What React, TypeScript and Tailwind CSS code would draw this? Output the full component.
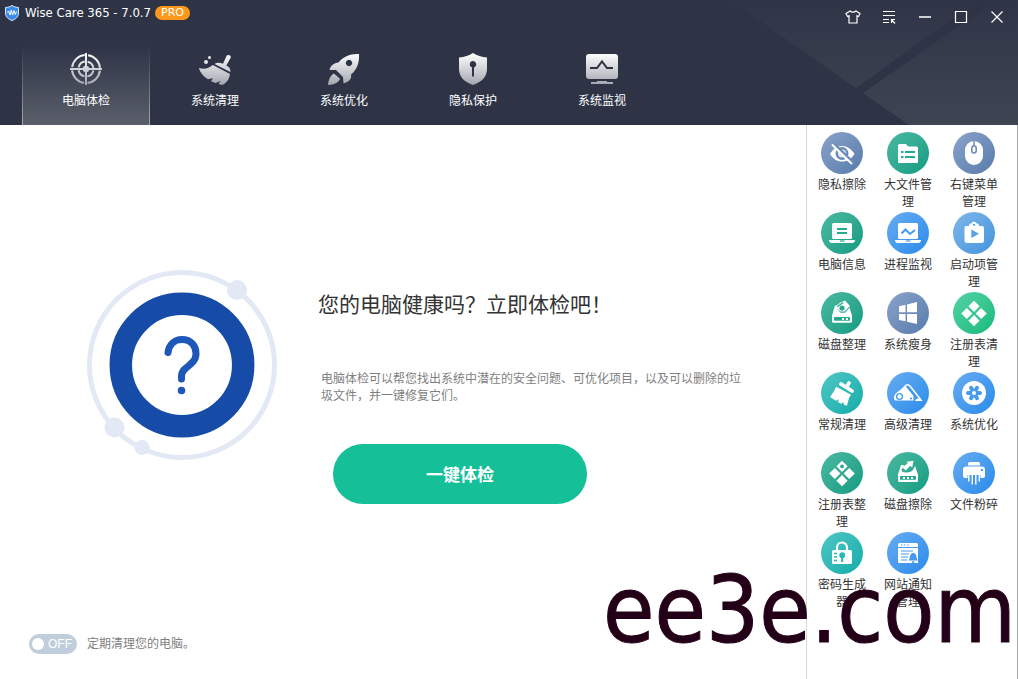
import { useState, type ReactNode } from "react";

const TONES = {
  slate: "bg-linear-to-br from-[#8aa3ca] to-[#587cac]",
  green: "bg-linear-to-br from-[#49b9a1] to-[#0c9c82]",
  blue: "bg-linear-to-br from-[#66acf1] to-[#278bea]",
  sky: "bg-linear-to-br from-[#7fb6e9] to-[#4294de]",
  emerald: "bg-linear-to-br from-[#52d2a5] to-[#0dbb7d]",
  teal: "bg-linear-to-br from-[#4cc7c4] to-[#0aacaa]",
};

type Tone = keyof typeof TONES;

const INK: Record<Tone, string> = {
  slate: "#6c8bb8",
  green: "#27a991",
  blue: "#469bee",
  sky: "#5aa2e2",
  emerald: "#2cc48f",
  teal: "#27b8b5",
};

type Tool = { label: string; tone: Tone; art: (ink: string) => ReactNode };

const laptop = (
  <>
    <rect x="11" y="11" width="20" height="16" rx="1.5" />
    <path d="M8 28h26c0 2-1 3-3 3H11c-2 0-3-1-3-3z" />
  </>
);

const diamond = (x: number, y: number) => (
  <path d={`M${x} ${y - 5.6}l5.6 5.6l-5.6 5.6l-5.6 -5.6z`} />
);

const TOOLS: Tool[] = [
  {
    label: "隐私擦除",
    tone: "slate",
    art: (ink) => (
      <>
        <path d="M9 22c3-5 7-8 12-8s9.500 3 12.500 8c-3 5-7.500 7.500-12.500 7.500S12 27 9 22z" />
        <circle cx="21" cy="21.500" r="6.500" fill={ink} />
        <circle cx="21" cy="21.500" r="4" fillOpacity="0.8" />
        <path d="M12.500 11.500L32.500 31" stroke={ink} strokeWidth="3" />
        <path d="M11 12.500L31 32" stroke="white" strokeWidth="2" />
      </>
    ),
  },
  {
    label: "大文件管理",
    tone: "green",
    art: (ink) => (
      <>
        <path d="M11 13.500q0-1.500 1.500-1.500h6.500l2 2.500h8.500q1.500 0 1.500 1.500v13.500q0 1.500-1.500 1.500h-17q-1.500 0-1.500-1.500z" />
        <path d="M14 20h2.500M18 20h10M14 25h2.500M18 25h10" stroke={ink} strokeWidth="2" />
      </>
    ),
  },
  {
    label: "右键菜单管理",
    tone: "slate",
    art: (ink) => (
      <>
        <rect x="12" y="9" width="18" height="24" rx="9" />
        <path d="M21 9v5" stroke={ink} strokeWidth="1.5" />
        <rect x="18.800" y="14" width="4.400" height="7" rx="2.200" stroke={ink} strokeWidth="1.6" />
      </>
    ),
  },
  {
    label: "电脑信息",
    tone: "green",
    art: (ink) => (
      <>
        {laptop}
        <path d="M16 17h10M16 21h10" stroke={ink} strokeWidth="2" />
        <path d="M19 29h4.500" stroke={ink} strokeWidth="1.2" />
      </>
    ),
  },
  {
    label: "进程监视",
    tone: "blue",
    art: (ink) => (
      <>
        {laptop}
        <path d="M14.500 21.500L18.500 17.500L23 22L28 18" fill="none" stroke={ink} strokeWidth="2" />
        <path d="M19 29h4.500" stroke={ink} strokeWidth="1.2" />
      </>
    ),
  },
  {
    label: "启动项管理",
    tone: "sky",
    art: (ink) => (
      <>
        <path d="M16 14c0-2 1-2.500 2.500-2.500C19 10.300 20 9.800 21 9.800s2 .5 2.500 1.700c1.500 0 2.500.5 2.500 2.500h3.500q1.500 0 1.500 2v12.500q0 2.500-2.500 2.500h-14.500q-2.500 0-2.500-2.500V16q0-2 1.500-2z" />
        <circle cx="21" cy="12.800" r="1.100" fill={ink} />
        <path d="M18.300 17.500L26 21.800L18.300 26z" fill={ink} />
      </>
    ),
  },
  {
    label: "磁盘整理",
    tone: "green",
    art: (ink) => (
      <>
        <path d="M14 13.500h1.500v2.500l4 4.800h4.500l4.500-5L31 23.500v5.800q0 1.500-1.500 1.500h-17q-1.500 0-1.500-1.500v-5.800z" />
        <path d="M14 14.800L19.500 10.500L24 8.500L29 14L23.500 19.500H19.500z" />
        <path d="M16.200 14.800l6-4.300" stroke={ink} strokeWidth="1.300" />
        <circle cx="21" cy="16" r="2.600" fill={ink} />
        <rect x="13" y="25" width="16" height="3.700" rx="0.5" fill={ink} />
        <path d="M21 26h2v2h-2zM25 26h2v2h-2z" />
      </>
    ),
  },
  {
    label: "系统瘦身",
    tone: "slate",
    art: () => (
      <path d="M12 14.300L18.500 12.800V20.300H12zM20 12.500L30 10V20.300H20zM12 22H18.500V29.300L12 28zM20 22H30V32L20 29.700z" />
    ),
  },
  {
    label: "注册表清理",
    tone: "emerald",
    art: () => (
      <>
        {diamond(21, 14.3)}
        {diamond(13.8, 21.5)}
        {diamond(28.2, 21.5)}
        {diamond(21, 28.7)}
      </>
    ),
  },
  {
    label: "常规清理",
    tone: "teal",
    art: () => (
      <>
        <path d="M15.200 14.800L30 22.800L28 26L26 33.800l-3-1l-.8-2.800l-1.700 1.800l-3.500-1.500l.8-3l-2.800 1.500L9 25q3.500-4 6.200-10.200z" />
        <path d="M20 12L31 19" stroke="white" strokeWidth="3.800" strokeLinecap="round" />
        <path d="M25.500 15L28 11" stroke="white" strokeWidth="3.600" strokeLinecap="round" />
      </>
    ),
  },
  {
    label: "高级清理",
    tone: "blue",
    art: (ink) => (
      <>
        <path d="M7 26.500C7 22.500 9.500 20.500 12 19L18 13.500L26.500 23v5.500H9q-2 0-2-2z" />
        <path d="M18 14c1.500-1.800 3.500-1.800 5 0L34 28" fill="none" stroke="white" strokeWidth="1.500" />
        <path d="M20.500 15.500L29.500 26.500" stroke={ink} strokeWidth="1.200" />
        <path d="M28 29c.5-2 2-2.500 4-2.500l4 2.500z" />
        <circle cx="12.500" cy="24.500" r="2.900" stroke={ink} strokeWidth="1.400" />
        <circle cx="24" cy="26.500" r="1.100" fill={ink} />
      </>
    ),
  },
  {
    label: "系统优化",
    tone: "blue",
    art: (ink) => (
      <>
        <circle cx="21" cy="21" r="12" />
        <g stroke={ink} strokeWidth="4" strokeLinecap="round">
          <path d="M15 21h12M18 15.800l6 10.400M24 15.800l-6 10.400" />
        </g>
        <circle cx="21" cy="21" r="4" fill={ink} />
        <circle cx="21" cy="21" r="2" />
      </>
    ),
  },
  {
    label: "注册表整理",
    tone: "green",
    art: (ink) => (
      <>
        {diamond(21, 14.3)}
        {diamond(13.8, 21.5)}
        {diamond(28.2, 21.5)}
        {diamond(21, 28.7)}
        <circle cx="21" cy="14.300" r="1.900" fill={ink} />
      </>
    ),
  },
  {
    label: "磁盘擦除",
    tone: "green",
    art: (ink) => (
      <>
        <path d="M14 13h3L14.500 18q0 2.500 5 2.500t7-3.500l1.500-3L31 22.500v6q0 1.500-1.500 1.500h-17q-1.500 0-1.500-1.500v-6z" />
        <path d="M19.500 9.800l7-1l-1.300 6.700l-1.900-1.700l-4.600 4.700l-3.400-3.200l5.600-4.100z" />
        <rect x="13" y="24" width="16" height="3.700" rx="0.500" fill={ink} />
        <path d="M16 25h2v2h-2zM20 25h2v2h-2zM24 25h2v2h-2z" />
      </>
    ),
  },
  {
    label: "文件粉碎",
    tone: "blue",
    art: (ink) => (
      <>
        <path d="M15 13.500V11.500q0-1.500 1.500-1.500h9q1.500 0 1.500 1.500v2z" />
        <path d="M10 17.500q0-3 3-3h16q3 0 3 3v6.500q0 2-2 2h-2.500v-3h-13v3h-2.500q-2 0-2-2z" />
        <path d="M15.800 22v7.500M19.300 22v10.500M22.800 22v10.500M26.300 22v7.500" stroke="white" strokeWidth="1.400" />
        <path d="M28 17h2v2h-2z" fill={ink} />
      </>
    ),
  },
  {
    label: "密码生成器",
    tone: "teal",
    art: (ink) => (
      <>
        <path d="M16 19v-3.500a5 5 0 0 1 10 0V19" fill="none" stroke="white" strokeWidth="2.200" />
        <rect x="11" y="18" width="20" height="14" rx="1.500" />
        <path d="M13 21.500h3M13 25h3M13 28.500h3" stroke={ink} strokeWidth="1.500" />
        <circle cx="21.200" cy="23.200" r="2.900" fill={ink} />
        <path d="M21.200 24v6" stroke={ink} strokeWidth="2" />
      </>
    ),
  },
  {
    label: "网站通知管理",
    tone: "blue",
    art: (ink) => (
      <>
        <path d="M11 12.500q0-1.500 1.500-1.500h17q1.500 0 1.500 1.500V15H11zM11 16h20v15H12.500q-1.500 0-1.500-1.500z" />
        <path d="M14 13h1.500M17 13h1.500M20 13h1.500" stroke={ink} strokeWidth="1" />
        <path d="M14 19h12M14 22h8M14 25h7M14 28h6" stroke={ink} strokeWidth="1.200" />
        <path d="M21.500 28.500c2-1.500.5-7.500 4.700-7.500s2.800 6 4.800 7.500z" fill={ink} />
        <path d="M24.800 30h2.600" stroke={ink} strokeWidth="1.500" />
      </>
    ),
  },
];

const NAV: { label: string; art: ReactNode }[] = [
  {
    label: "电脑体检",
    art: (
      <>
        <g fill="none" stroke="url(#metal)">
          <circle cx="16" cy="16" r="14" strokeWidth="2" strokeDasharray="18.500 3.490" strokeDashoffset="-1.750" />
          <circle cx="16" cy="16" r="7.500" strokeWidth="2" strokeDasharray="8.800 2.980" strokeDashoffset="-1.500" />
        </g>
        <path d="M15 0h2v32h-2zM0 15h32v2H0z" />
        <circle cx="16" cy="16" r="3.200" />
      </>
    ),
  },
  {
    label: "系统清理",
    art: (
      <>
        <circle cx="7" cy="9" r="2" />
        <circle cx="10.500" cy="4.500" r="1.500" />
        <path d="M29 2q3.300 0 2.700 2.800l-4.400 7.700q4.700 2 4 6.500L15.500 11q3-2.500 8.500-.2L27.500 3q.5-1 1.500-1z" />
        <path d="M13.800 12L31 21c-1 5.500-3 8.500-7.500 11l-4-1l2-3l-5 2l-4.500-1.800l2-3l-5 1C4.500 23.500 1 19.500 0 15c5.500 1.500 9.500.5 13.800-3z" />
      </>
    ),
  },
  {
    label: "系统优化",
    art: (
      <>
        <path
          fillRule="evenodd"
          d="M31 1c.6 8.500-2 16-8 20.500c1 4-2 7.500-7.500 9l-.5-6.500l-7-7L1.500 17c1-4.500 4.500-7 9-7.500C15.500 3.500 22 .5 31 1zM21 6.800a3.200 3.200 0 1 0 .01 0z"
        />
        <path d="M6 20.500l6 5.300c-1.500 4-6 6.200-12 6.200c.3-5 2.200-9.500 6-11.500z" />
      </>
    ),
  },
  {
    label: "隐私保护",
    art: (
      <path
        fillRule="evenodd"
        d="M16 0c4 2.500 8.500 4 14 4.500V16c0 8-5.500 13-14 16C7.500 29 2 24 2 16V4.500C7.500 4 12 2.500 16 0zM16 8a3.300 3.300 0 0 0-1 6.400V23.500h2V14.400A3.300 3.300 0 0 0 16 8z"
      />
    ),
  },
  {
    label: "系统监视",
    art: (
      <>
        <rect x="0" y="1" width="32" height="25" rx="3" />
        <path d="M4 15h7l5-6.500L21 15h6" fill="none" stroke="#2e3446" strokeWidth="2" />
        <path d="M11 28h10v1h6v2H5v-2h6z" />
      </>
    ),
  },
];

function WindowButton({ label, children }: { label: string; children: ReactNode }) {
  return (
    <button type="button" aria-label={label} className="flex h-[34px] w-9 items-center justify-center text-white">
      <svg viewBox="0 0 16 16" className="size-4" fill="none" stroke="currentColor" strokeWidth="1.2">
        {children}
      </svg>
    </button>
  );
}

function Header() {
  const [active, setActive] = useState(0);
  return (
    <header className="relative bg-[#2e3446] text-white">
      <svg className="absolute top-0 right-0 h-full w-[288px]" viewBox="0 0 288 125" preserveAspectRatio="none" aria-hidden="true">
        <defs>
          <linearGradient id="facet" x1="0" y1="0" x2="0" y2="125" gradientUnits="userSpaceOnUse">
            <stop offset="0" stopColor="#2f3547" />
            <stop offset="1" stopColor="#3f4453" />
          </linearGradient>
        </defs>
        <path d="M0 0L126 88L248 0zM133 93L179 125H288V0H267z" fill="url(#facet)" />
      </svg>
      <div className="relative flex h-[45px] items-start justify-between pr-[3px] pl-[5px]">
        <div className="flex h-[26px] items-center">
          <svg viewBox="0 0 14 16" className="h-4 w-[14px]" aria-hidden="true">
            <path d="M7 .5C9 1.800 11 2.300 13.500 2.500V8c0 4-3 6.300-6.500 7.500C3.500 14.300.5 12 .5 8V2.500C3 2.300 5 1.800 7 .5z" fill="#3b8be8" stroke="#d7e8fb" />
            <path d="M2.500 7.500l1-1.500l1.500 4L6.300 5L7.500 10L9 5.500l1.300 4l1.200-3" fill="none" stroke="white" />
          </svg>
          <h1 className="ml-[6px] font-['DejaVu_Sans_Condensed','DejaVu_Sans',sans-serif] text-[13px]">
            Wise Care 365 - 7.0.7
          </h1>
          <span className="ml-1 rounded-full bg-[#ff981a] px-[6px] font-['DejaVu_Sans',sans-serif] text-[11px] leading-[14px]">PRO</span>
        </div>
        <div className="flex">
          <WindowButton label="换肤">
            <path d="M5 2C6.500 3.500 9.500 3.500 11 2L15 4.500L13.500 7.500L12 6.800V14H4V6.800L2.500 7.500L1 4.500z" />
          </WindowButton>
          <WindowButton label="菜单">
            <path d="M2 2.500h12M2 6.500h12M2 10.500h6M2 13.500h6M14 14.500l-3.500-4M10.500 14v-3.500H14" />
          </WindowButton>
          <WindowButton label="最小化">
            <path d="M2 8h12" strokeWidth="2" stroke="#d0d0d0" />
          </WindowButton>
          <WindowButton label="最大化">
            <path d="M2.500 2.500h11v11h-11z" />
          </WindowButton>
          <WindowButton label="关闭">
            <path d="M2.500 2.500l11 11M13.500 2.500l-11 11" />
          </WindowButton>
        </div>
      </div>
      <nav className="relative flex gap-px pl-[22px]">
        {NAV.map((item, i) => (
          <button
            key={item.label}
            type="button"
            aria-current={i === active ? "page" : undefined}
            onClick={() => setActive(i)}
            className={
              "flex h-20 w-32 flex-col items-center border-x pt-2 text-[12px] leading-[18px] " +
              (i === active
                ? "bg-linear-to-b from-[#2e3446] to-[#5b5f6b] [border-image:linear-gradient(to_bottom,#2e3446,#a9acb3)_1]"
                : "border-transparent")
            }
          >
            <svg viewBox="0 0 32 32" className="size-8" fill="url(#metal)" aria-hidden="true">
              <defs>
                <linearGradient id="metal" x1="0" y1="0" x2="0" y2="32" gradientUnits="userSpaceOnUse">
                  <stop offset="0" stopColor="#ffffff" />
                  <stop offset="1" stopColor="#a3a6af" />
                </linearGradient>
              </defs>
              {item.art}
            </svg>
            <span className="mt-[6px]">{item.label}</span>
          </button>
        ))}
      </nav>
    </header>
  );
}

function Checkup() {
  const [scheduled, setScheduled] = useState(false);
  return (
    <main className="flex min-w-0 flex-1 flex-col">
      <div className="flex flex-1 items-start pt-[145px] pl-[87px]">
        <svg viewBox="0 0 190 190" className="size-[190px] shrink-0" aria-hidden="true">
          <circle cx="95" cy="95" r="92.500" fill="none" stroke="#e2e8f4" strokeWidth="5" />
          <g fill="#e2e8f4">
            <circle cx="150" cy="20" r="10" />
            <circle cx="27.500" cy="157.500" r="10" />
            <circle cx="55" cy="177.500" r="7.500" />
          </g>
          <circle cx="95" cy="95" r="61.200" fill="none" stroke="#164ba8" strokeWidth="22.500" />
          <path
            d="M81 82.500C82 75 87 69.500 95 69.500C104 69.500 109 76 109 83.500C109 96 94.500 96 94.500 106V109"
            fill="none"
            stroke="#1e57b8"
            strokeWidth="7"
            strokeLinecap="round"
            strokeLinejoin="round"
          />
          <circle cx="94.500" cy="120.500" r="3.800" fill="#1e57b8" />
        </svg>
        <div className="ml-[41px] flex flex-col items-start pt-[18px]">
          <h2 className="text-[21px] leading-[30px] text-[#333]">您的电脑健康吗？立即体检吧！</h2>
          <p className="mt-[51px] ml-[3px] max-w-[424px] text-[12px] leading-[17px] text-[#808080]">
            电脑体检可以帮您找出系统中潜在的安全问题、可优化项目，以及可以删除的垃圾文件，并一键修复它们。
          </p>
          <button
            type="button"
            className="mt-[41px] ml-[15px] h-[60px] w-[254px] rounded-full bg-[#15bf98] text-[17px] font-bold text-white"
          >
            一键体检
          </button>
        </div>
      </div>
      <label className="flex items-center gap-[10px] pb-[25px] pl-[29px] text-[12px] leading-[17px] text-[#808080]">
        <input
          type="checkbox"
          role="switch"
          className="peer sr-only"
          checked={scheduled}
          onChange={(e) => setScheduled(e.target.checked)}
        />
        <span
          aria-hidden="true"
          className="flex h-5 w-12 items-center gap-1 rounded-full bg-[#c0cedc] px-[3px] font-['Liberation_Sans',sans-serif] text-[12px] text-white peer-checked:flex-row-reverse peer-checked:bg-[#15bf98]"
        >
          <span className="size-3 rounded-full bg-white" />
          {scheduled ? "ON" : "OFF"}
        </span>
        <span className="pb-[3px]">定期清理您的电脑。</span>
      </label>
    </main>
  );
}

function Toolbox() {
  return (
    <aside className="w-[212px] shrink-0 border-x border-l-[#d9d9d9] border-r-[#a5a5a5] pt-[7px] pl-[2px]">
      <ul className="grid auto-rows-[80px] grid-cols-[repeat(3,66px)]">
        {TOOLS.map(({ label, tone, art }) => (
          <li key={label} className="flex justify-center">
            <button type="button" className="flex h-full w-[50px] flex-col items-center text-[12px] leading-[17px] text-[#333]">
              <span className={"rounded-full " + TONES[tone]}>
                <svg viewBox="0 0 42 42" className="size-[42px]" fill="white" aria-hidden="true">
                  {art(INK[tone])}
                </svg>
              </span>
              <span className="mt-px">{label}</span>
            </button>
          </li>
        ))}
      </ul>
    </aside>
  );
}

export default function App() {
  return (
    <div className="relative flex min-h-screen flex-col overflow-hidden bg-white font-['Noto_Sans_CJK_SC',sans-serif]">
      <Header />
      <div className="flex flex-1">
        <Checkup />
        <Toolbox />
      </div>
      <p className="pointer-events-none absolute right-[2px] bottom-[14px] font-['DejaVu_Sans_Condensed','DejaVu_Sans',sans-serif] text-[93px] leading-[110px] text-[#240018] [-webkit-text-stroke:1px_#240018]">
        ee3e.com
      </p>
    </div>
  );
}
